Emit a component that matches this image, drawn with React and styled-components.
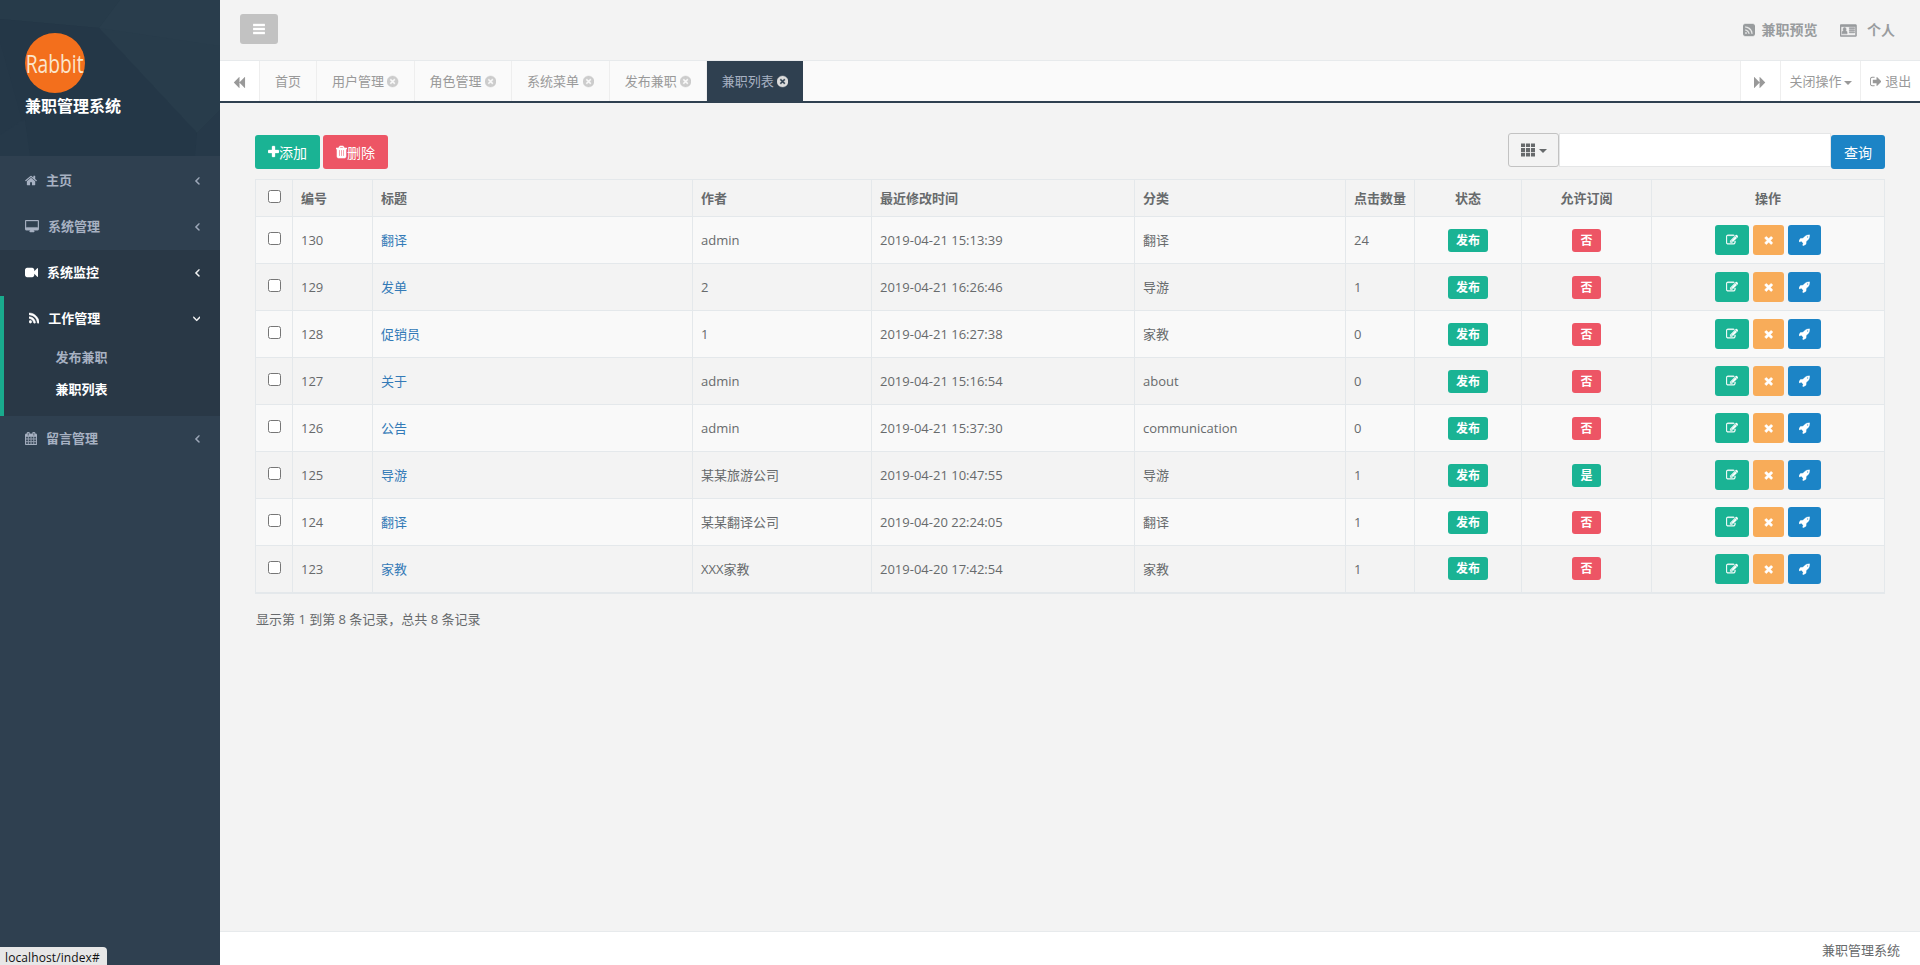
import React from 'react';
import styled, { createGlobalStyle } from 'styled-components';

const GlobalStyle = createGlobalStyle`
  * {
    box-sizing: border-box;
  }
  body {
    margin: 0;
    background: #f3f3f3;
    color: #676a6c;
    font-family: "Open Sans", "Noto Sans CJK SC", sans-serif;
    font-size: 13px;
    line-height: 18px;
  }
`;

// [viewBox x, viewBox width, path], all on a 1792 high grid
const icons = {
  home: [64, 1664, 'M1472 992v480q0 26-19 45t-45 19h-384v-384h-256v384h-384q-26 0-45-19t-19-45v-480q0-1 .5-3t.5-3l575-474 575 474q1 2 1 6zm223-69l-62 74q-8 9-21 11h-3q-13 0-21-7l-692-577-692 577q-12 8-24 7-13-2-21-11l-62-74q-8-10-7-23.5t11-21.5l719-599q32-26 76-26t76 26l244 204v-195q0-14 9-23t23-9h192q14 0 23 9t9 23v408l219 182q10 8 11 21.5t-7 23.5z'],
  desktop: [0, 1920, 'M1792 992v-832q0-13-9.5-22.5t-22.5-9.5h-1600q-13 0-22.5 9.5t-9.5 22.5v832q0 13 9.5 22.5t22.5 9.5h1600q13 0 22.5-9.5t9.5-22.5zm128-832v1088q0 66-47 113t-113 47h-544q0 37 16 77.5t32 71 16 43.5q0 26-19 45t-45 19h-512q-26 0-45-19t-19-45q0-14 16-44t32-70 16-78h-544q-66 0-113-47t-47-113v-1088q0-66 47-113t113-47h1600q66 0 113 47t47 113z', 60],
  video: [0, 1792, 'M1792 352v1088q0 42-39 59-13 5-25 5-27 0-45-19l-403-403v166q0 119-84.5 203.5t-203.5 84.5h-704q-119 0-203.5-84.5t-84.5-203.5v-704q0-119 84.5-203.5t203.5-84.5h704q119 0 203.5 84.5t84.5 203.5v165l403-402q18-19 45-19 12 0 25 5 39 17 39 59z'],
  rss: [192, 1408, 'M576 1344q0 80-56 136t-136 56-136-56-56-136 56-136 136-56 136 56 56 136zm512 123q2 28-17 48-18 21-47 21h-135q-25 0-43-16.5t-20-41.5q-22-229-184.5-391.5t-391.5-184.5q-25-2-41.5-20t-16.5-43v-135q0-29 21-47 17-17 43-17h5q160 13 306 80.5t259 181.5q114 113 181.5 259t80.5 306zm512 2q2 27-18 47-18 20-46 20h-143q-26 0-44.5-17.5t-19.5-42.5q-12-215-101-408.5t-231.5-336-336-231.5-408.5-102q-25-1-42.5-19.5t-17.5-43.5v-143q0-28 20-46 18-18 44-18h3q262 13 501.5 120t425.5 294q187 186 294 425.5t120 501.5z', 60],
  calendar: [64, 1664, 'M192 1664h288v-288h-288v288zm352 0h320v-288h-320v288zm-352-352h288v-320h-288v320zm352 0h320v-320h-320v320zm-352-384h288v-288h-288v288zm736 736h320v-288h-320v288zm-384-736h320v-288h-320v288zm768 736h288v-288h-288v288zm-384-352h320v-320h-320v320zm-352-864v-288q0-13-9.5-22.5t-22.5-9.5h-64q-13 0-22.5 9.5t-9.5 22.5v288q0 13 9.5 22.5t22.5 9.5h64q13 0 22.5-9.5t9.5-22.5zm736 864h288v-320h-288v320zm-384-384h320v-288h-320v288zm384 0h288v-288h-288v288zm32-480v-288q0-13-9.5-22.5t-22.5-9.5h-64q-13 0-22.5 9.5t-9.5 22.5v288q0 13 9.5 22.5t22.5 9.5h64q13 0 22.5-9.5t9.5-22.5zm384-64v1280q0 52-38 90t-90 38h-1408q-52 0-90-38t-38-90v-1280q0-52 38-90t90-38h128v-96q0-66 47-113t113-47h64q66 0 113 47t47 113v96h384v-96q0-66 47-113t113-47h64q66 0 113 47t47 113v96h128q52 0 90 38t38 90z', 45],
  left: [576, 640, 'M1203 544q0 13-10 23l-393 393 393 393q10 10 10 23t-10 23l-50 50q-10 10-23 10t-23-10l-466-466q-10-10-10-23t10-23l466-466q10-10 23-10t23 10l50 50q10 10 10 23z', 70],
  down: [384, 1024, 'M1395 736q0 13-10 23l-466 466q-10 10-23 10t-23-10l-466-466q-10-10-10-23t10-23l50-50q10-10 23-10t23 10l393 393 393-393q10-10 23-10t23 10l50 50q10 10 10 23z', 70],
  bars: [128, 1536, 'M1664 1344v128q0 26-19 45t-45 19h-1408q-26 0-45-19t-19-45v-128q0-26 19-45t45-19h1408q26 0 45 19t19 45zm0-512v128q0 26-19 45t-45 19h-1408q-26 0-45-19t-19-45v-128q0-26 19-45t45-19h1408q26 0 45 19t19 45zm0-512v128q0 26-19 45t-45 19h-1408q-26 0-45-19t-19-45v-128q0-26 19-45t45-19h1408q26 0 45 19t19 45z', 50],
  rssSquare: [128, 1536, 'M640 1280q0-53-37.5-90.5t-90.5-37.5-90.5 37.5-37.5 90.5 37.5 90.5 90.5 37.5 90.5-37.5 37.5-90.5zm351 94q-13-232-177-396t-396-177q-14-1-24 9t-10 23v128q0 13 8.5 22t21.5 10q154 11 264 121t121 264q1 13 10 21.5t22 8.5h128q13 0 23-10t9-24zm384 1q-5-154-56-297.5t-139.5-260-205-205-260-139.5-297.5-56q-14-1-23 9-10 10-10 23v128q0 13 9 22t22 10q204 7 378 111.5t278.5 278.5 111.5 378q1 13 10 22t22 9h128q13 0 23-10 11-9 9-23zm289-959v960q0 119-84.5 203.5t-203.5 84.5h-960q-119 0-203.5-84.5t-84.5-203.5v-960q0-119 84.5-203.5t203.5-84.5h960q119 0 203.5 84.5t84.5 203.5z', 50],
  card: [0, 2048, 'M128 192h1792q128 0 128 128v1216q0 128-128 128h-1792q-128 0-128-128v-1216q0-128 128-128zm0 256v1088h1792v-1088zm128 896v-160q0-220 180-260-60-70-60-160 0-210 190-210t190 210q0 90-60 160 180 40 180 260v160zm896-128v-128h640v128zm0-256v-128h640v128zm0-256v-128h640v128z', 70],
  backward: [64, 1664, 'M1683 141q19-19 32-13t13 32v1472q0 26-13 32t-32-13l-710-710q-9-9-13-19v710q0 26-13 32t-32-13l-710-710q-19-19-19-45t19-45l710-710q19-19 32-13t13 32v710q4-10 13-19z'],
  forward: [64, 1664, 'M109 1651q-19 19-32 13t-13-32v-1472q0-26 13-32t32 13l710 710q9 9 13 19v-710q0-26 13-32t32 13l710 710q19 19 19 45t-19 45l-710 710q-19 19-32 13t-13-32v-710q-4 10-13 19z'],
  close: [128, 1536, 'M1277 1122q0-26-19-45l-181-181 181-181q19-19 19-45 0-27-19-46l-90-90q-19-19-46-19-26 0-45 19l-181 181-181-181q-19-19-45-19-27 0-46 19l-90 90q-19 19-19 46 0 26 19 45l181 181-181 181q-19 19-19 45 0 27 19 46l90 90q19 19 46 19 26 0 45-19l181-181 181 181q19 19 45 19 27 0 46-19l90-90q19-19 19-46zm387-226q0 209-103 385.5t-279.5 279.5-385.5 103-385.5-103-279.5-279.5-103-385.5 103-385.5 279.5-279.5 385.5-103 385.5 103 279.5 279.5 103 385.5z', 50],
  signOut: [64, 1568, 'M704 1440q0 4 1 20t.5 26.5-3 23.5-10 19.5-20.5 6.5h-320q-119 0-203.5-84.5t-84.5-203.5v-704q0-119 84.5-203.5t203.5-84.5h320q13 0 22.5 9.5t9.5 22.5q0 4 1 20t.5 26.5-3 23.5-10 19.5-20.5 6.5h-320q-66 0-113 47t-47 113v704q0 66 47 113t113 47h312l11.5 1 11.5 3 8 5.5 7 9 2 13.5zm928-544q0 26-19 45l-544 544q-19 19-45 19t-45-19-19-45v-288h-448q-26 0-45-19t-19-45v-384q0-26 19-45t45-19h448v-288q0-26 19-45t45-19 45 19l544 544q19 19 19 45z'],
  plus: [192, 1408, 'M1600 736v192q0 40-28 68t-68 28h-416v416q0 40-28 68t-68 28h-192q-40 0-68-28t-28-68v-416h-416q-40 0-68-28t-28-68v-192q0-40 28-68t68-28h416v-416q0-40 28-68t68-28h192q40 0 68 28t28 68v416h416q40 0 68 28t28 68z', 40],
  trash: [192, 1408, 'M704 1376v-704q0-14-9-23t-23-9h-64q-14 0-23 9t-9 23v704q0 14 9 23t23 9h64q14 0 23-9t9-23zm256 0v-704q0-14-9-23t-23-9h-64q-14 0-23 9t-9 23v704q0 14 9 23t23 9h64q14 0 23-9t9-23zm256 0v-704q0-14-9-23t-23-9h-64q-14 0-23 9t-9 23v704q0 14 9 23t23 9h64q14 0 23-9t9-23zm-544-992h448l-48-117q-7-9-17-11h-317q-10 2-17 11zm928 32v64q0 14-9 23t-23 9h-96v948q0 83-47 143.5t-113 60.5h-832q-66 0-113-58.5t-47-141.5v-952h-96q-14 0-23-9t-9-23v-64q0-14 9-23t23-9h309l70-167q15-37 54-63t79-26h320q40 0 79 26t54 63l70 167h309q14 0 23 9t9 23z', 70],
  edit: [0, 1792, 'M888 1184l116-116-152-152-116 116v56h96v96h56zm440-720q-16-16-33 1l-350 350q-17 17-1 33t33-1l350-350q17-17 1-33zm80 594v190q0 119-84.5 203.5t-203.5 84.5h-832q-119 0-203.5-84.5t-84.5-203.5v-832q0-119 84.5-203.5t203.5-84.5h832q63 0 117 25 15 7 18 23 3 17-9 29l-49 49q-14 14-32 8-23-6-45-6h-832q-66 0-113 47t-47 113v832q0 66 47 113t113 47h832q66 0 113-47t47-113v-126q0-13 9-22l64-64q15-15 35-7t20 29zm-96-738l288 288-672 672h-288v-288zm444 132l-92 92-288-288 92-92q28-28 68-28t68 28l152 152q28 28 28 68t-28 68z', 60],
  remove: [192, 1408, 'M1490 1322q0 40-28 68l-136 136q-28 28-68 28t-68-28l-294-294-294 294q-28 28-68 28t-68-28l-136-136q-28-28-28-68t28-68l294-294-294-294q-28-28-28-68t28-68l136-136q28-28 68-28t68 28l294 294 294-294q28-28 68-28t68 28l136 136q28 28 28 68t-28 68l-294 294 294 294q28 28 28 68z', 60],
  rocket: [64, 1664, 'M1440 448q0-40-28-68t-68-28-68 28-28 68 28 68 68 28 68-28 28-68zm224-288q0 249-75.5 430.5t-253.5 360.5q-81 80-195 176l-20 379q-2 16-16 26l-384 224q-7 4-16 4-12 0-23-9l-64-64q-13-14-8-32l85-276-281-281-276 85q-3 1-9 1-14 0-23-9l-64-64q-17-19-5-39l224-384q10-14 26-16l379-20q96-114 176-195 188-187 358-258t431-71q14 0 24 9.5t10 22.5z', 50],
  th: [0, 1792, 'M0 64h520v460h-520zM640 64h520v460h-520zM1280 64h512v460h-512zM0 640h520v500h-520zM640 640h520v500h-520zM1280 640h512v500h-512zM0 1260h520v460h-520zM640 1260h520v460h-520zM1280 1260h512v460h-512z'],
};

const Svg = styled.svg`
  display: block;
  flex: none;
  fill: currentColor;
  fill-rule: ${(p) => (p.$evenodd ? 'evenodd' : 'nonzero')};
  stroke: currentColor;
  stroke-width: ${(p) => p.$weight};
`;

const Icon = ({ name, size = 13, className }) => {
  const [x, w, d, weight = 0] = icons[name];
  return (
    <Svg className={className} $evenodd={name === 'card'} $weight={weight} width={(w / 1792) * size} height={size} viewBox={`${x} 0 ${w} 1792`}>
      <path d={d} />
    </Svg>
  );
};

const Page = styled.div`
  display: flex;
  height: 965px;
  position: relative;
  overflow: hidden;
`;

const Sidebar = styled.nav`
  width: 220px;
  flex: none;
  background: #2f4050;
  color: #a7b1c2;
  font-weight: 600;
`;

const Profile = styled.div`
  position: relative;
  height: 156px;
  margin-bottom: 2px;
  padding: 33px 25px 0;
  background: #263949;
`;

const Pattern = styled.svg`
  position: absolute;
  top: 0;
  left: 0;
`;

const Avatar = styled.div`
  position: relative;
  display: flex;
  align-items: center;
  justify-content: center;
  width: 60px;
  height: 60px;
  border-radius: 50%;
  background: #f36f1c;
  color: #fbe6cc;
  font: 25px/60px "Open Sans", sans-serif;
`;

const AvatarText = styled.span`
  flex: none;
  transform: scaleX(0.77);
`;

const SystemName = styled.div`
  position: relative;
  margin-top: 1px;
  color: #fff;
  font-size: 16px;
  font-weight: 700;
  line-height: 24px;
`;

const MenuItem = styled.div`
  display: flex;
  align-items: center;
  height: 46px;
  padding: 0 20px 1px 25px;
  background: ${(p) => (p.$active ? '#293846' : 'transparent')};
  color: ${(p) => (p.$active ? '#fff' : '#a7b1c2')};
`;

const MenuLabel = styled.span`
  flex: 1;
  margin: 0 0 1px 9px;
`;

const OpenGroup = styled.div`
  height: 120px;
  border-left: 4px solid #19aa8d;
  background: #293846;
`;

const SubItem = styled.div`
  height: 32px;
  padding-left: 51.5px;
  line-height: 30px;
  color: ${(p) => (p.$active ? '#fff' : '#a7b1c2')};
`;

const Main = styled.main`
  flex: 1;
  display: flex;
  flex-direction: column;
  min-width: 0;
`;

const Topbar = styled.header`
  display: flex;
  align-items: center;
  height: 60px;
  padding: 0 25px 0 20px;
  color: #999c9e;
  font-size: 14px;
  font-weight: 600;
`;

const Toggle = styled.button`
  display: flex;
  align-items: center;
  justify-content: center;
  width: 38px;
  height: 30px;
  margin: -2px auto 0 0;
  padding: 0;
  border: 0;
  border-radius: 3px;
  background: #c2c2c2;
  color: #fff;
`;

const TopLink = styled.a`
  display: flex;
  align-items: center;
  gap: ${(p) => p.$gap}px;
  margin-left: ${(p) => p.$left || 0}px;
`;

const Tabs = styled.div`
  display: flex;
  height: 43px;
  border-top: 1px solid #e7eaec;
  border-bottom: 2px solid #2f4050;
  background: #fafafa;
  color: #999;
`;

const Tab = styled.div`
  display: flex;
  align-items: center;
  gap: 3.4px;
  padding: 0 ${(p) => (p.$active ? 14.6 : 15)}px 1px;
  border-right: ${(p) => (p.$active ? 0 : '1px solid #eee')};
  background: ${(p) => (p.$active ? '#2f4050' : 'transparent')};
  color: ${(p) => (p.$active ? '#a7b1c2' : '#999')};
`;

const TabClose = styled(Icon)`
  margin-top: 1px;
  color: ${(p) => (p.$active ? '#ddd' : '#ccc')};
`;

const RollButton = styled.div`
  display: flex;
  align-items: center;
  justify-content: center;
  gap: ${(p) => p.$gap || 0}px;
  width: ${(p) => p.$width}px;
  margin-left: ${(p) => (p.$push ? 'auto' : 0)};
  padding-top: ${(p) => p.$drop || 0}px;
  border-left: ${(p) => (p.$first ? 0 : '1px solid #eee')};
  border-right: ${(p) => (p.$first ? '1px solid #eee' : 0)};
  background: #fff;
`;

const Caret = styled.span`
  width: 0;
  height: 0;
  margin-top: 3px;
  border: 4px solid transparent;
  border-top-color: currentColor;
  border-bottom: 0;
`;

const Content = styled.section`
  flex: 1;
  padding: 30px 35px 0;
`;

const Toolbar = styled.div`
  display: flex;
  align-items: flex-start;
  height: 46px;
`;

const ToolButton = styled.button`
  display: flex;
  align-items: center;
  justify-content: center;
  width: ${(p) => p.$width}px;
  height: 34px;
  margin: 2px ${(p) => p.$gap || 0}px 0 0;
  padding: 0 0 1px;
  border: 0;
  border-radius: 3px;
  background: ${(p) => p.$color};
  color: #fff;
  font: 14px "Open Sans", "Noto Sans CJK SC", sans-serif;
`;

const ColumnsButton = styled.button`
  display: flex;
  align-items: center;
  justify-content: center;
  gap: 4px;
  width: 51px;
  height: 34px;
  margin-left: auto;
  padding: 0 0 1px;
  border: 1px solid #c2c2c2;
  border-radius: 3px;
  background: #f3f3f3;
  color: #676a6c;
`;

const SearchInput = styled.input`
  width: 272px;
  height: 34px;
  border: 1px solid #e5e6e7;
  background: #fff;
`;

const Table = styled.table`
  width: 1630px;
  table-layout: fixed;
  border-collapse: collapse;
  border: 1px solid #e4e8eb;
  border-bottom-width: 2px;
`;

const Th = styled.th`
  height: 37px;
  padding: 0 8px 1px;
  border: 1px solid #e4e8eb;
  text-align: ${(p) => p.$align || 'left'};
  font-weight: 700;
`;

const Tr = styled.tr`
  background: ${(p) => (p.$odd ? '#f9f9f9' : 'transparent')};
`;

const Td = styled.td`
  height: 47px;
  padding: 0 8px;
  border: 1px solid #e4e8eb;
  text-align: ${(p) => p.$align || 'left'};
`;

const Check = styled.input`
  display: block;
  width: 13px;
  height: 13px;
  margin: 0 auto 3px;
`;

const TitleLink = styled.a`
  color: #337ab7;
`;

const Badge = styled.span`
  display: inline-block;
  height: 23px;
  padding: 0 8px;
  border-radius: 3px;
  background: ${(p) => p.$color};
  color: #fff;
  font-size: 12px;
  font-weight: 700;
  line-height: 23px;
  vertical-align: middle;
`;

const Actions = styled.div`
  display: flex;
  justify-content: center;
  gap: 4px;
`;

const ActionButton = styled.button`
  display: flex;
  align-items: center;
  justify-content: center;
  width: ${(p) => p.$width}px;
  height: 30px;
  padding: 0;
  border: 0;
  border-radius: 3px;
  background: ${(p) => p.$color};
  color: #fff;
`;

const Summary = styled.div`
  margin: 16px 0 0 1px;
`;

const Footer = styled.footer`
  height: 34px;
  padding: 9px 20px 0 0;
  border-top: 1px solid #e7eaec;
  background: #fff;
  text-align: right;
`;

const StatusBubble = styled.div`
  position: absolute;
  left: 0;
  bottom: 0;
  width: 107px;
  height: 18px;
  padding-left: 5px;
  border-top-right-radius: 4px;
  background: #e7e7e7;
  color: #111;
  font: 12px/21px "Open Sans", sans-serif;
  letter-spacing: 0.1px;
`;

const green = '#1ab394';
const red = '#ed5565';
const orange = '#f8ac59';
const blue = '#1c84c6';

const tabs = ['用户管理', '角色管理', '系统菜单', '发布兼职', '兼职列表'];

const columns = [
  ['编号', 80],
  ['标题', 320],
  ['作者', 179],
  ['最近修改时间', 263],
  ['分类', 211],
  ['点击数量', 69],
  ['状态', 107, 'center'],
  ['允许订阅', 130, 'center'],
  ['操作', 233, 'center'],
];

const rows = [
  [130, '翻译', 'admin', '2019-04-21 15:13:39', '翻译', 24, false],
  [129, '发单', '2', '2019-04-21 16:26:46', '导游', 1, false],
  [128, '促销员', '1', '2019-04-21 16:27:38', '家教', 0, false],
  [127, '关于', 'admin', '2019-04-21 15:16:54', 'about', 0, false],
  [126, '公告', 'admin', '2019-04-21 15:37:30', 'communication', 0, false],
  [125, '导游', '某某旅游公司', '2019-04-21 10:47:55', '导游', 1, true],
  [124, '翻译', '某某翻译公司', '2019-04-20 22:24:05', '翻译', 1, false],
  [123, '家教', 'XXX家教', '2019-04-20 17:42:54', '家教', 1, false],
];

const Menu = ({ icon, label, active, open }) => (
  <MenuItem $active={active}>
    <Icon name={icon} />
    <MenuLabel>{label}</MenuLabel>
    <Icon name={open ? 'down' : 'left'} />
  </MenuItem>
);

const App = () => {
  return (
    <Page>
      <GlobalStyle />
      <Sidebar>
        <Profile>
          <Pattern width="220" height="156">
            <path d="M0 0H120L99 28L0 19Z" fill="#273b4a" />
            <path d="M120 0H220V110L197 133L99 28Z" fill="#283c4b" />
            <path d="M99 28L220 46V0H120Z" fill="#293d4c" />
            <path d="M0 19L99 28L197 133L195 156H30L25 120L0 125Z" fill="#243747" />
            <path d="M0 41L22 120L0 135Z" fill="#253848" />
            <path d="M0 135L25 120L30 156H0Z" fill="#263949" />
            <path d="M197 133L220 110V156H195Z" fill="#263949" />
          </Pattern>
          <Avatar><AvatarText>Rabbit</AvatarText></Avatar>
          <SystemName>兼职管理系统</SystemName>
        </Profile>
        <Menu icon="home" label="主页" />
        <Menu icon="desktop" label="系统管理" />
        <Menu icon="video" label="系统监控" active />
        <OpenGroup>
          <Menu icon="rss" label="工作管理" active open />
          <SubItem>发布兼职</SubItem>
          <SubItem $active>兼职列表</SubItem>
        </OpenGroup>
        <Menu icon="calendar" label="留言管理" />
      </Sidebar>
      <Main>
        <Topbar>
          <Toggle><Icon name="bars" size={14} /></Toggle>
          <TopLink $gap={6}><Icon name="rssSquare" size={14} />兼职预览</TopLink>
          <TopLink $gap={10} $left={23}><Icon name="card" size={14.5} />个人</TopLink>
        </Topbar>
        <Tabs>
          <RollButton $width={40} $drop={2} $first><Icon name="backward" /></RollButton>
          <Tab>首页</Tab>
          {tabs.map((name, i) => (
            <Tab key={name} $active={i === tabs.length - 1}>
              {name}
              <TabClose name="close" $active={i === tabs.length - 1} />
            </Tab>
          ))}
          <RollButton $width={40} $drop={2} $push><Icon name="forward" /></RollButton>
          <RollButton $width={80} $gap={2}>关闭操作<Caret /></RollButton>
          <RollButton $width={60} $gap={4}><Icon name="signOut" />退出</RollButton>
        </Tabs>
        <Content>
          <Toolbar>
            <ToolButton $width={65} $gap={3} $color={green}><Icon name="plus" size={14} />添加</ToolButton>
            <ToolButton $width={65} $color={red}><Icon name="trash" size={14} />删除</ToolButton>
            <ColumnsButton><Icon name="th" size={14} /><Caret /></ColumnsButton>
            <SearchInput type="text" />
            <ToolButton $width={54} $color={blue}>查询</ToolButton>
          </Toolbar>
          <Table>
            <colgroup>
              <col width="37" />
              {columns.map(([name, width]) => <col key={name} width={width} />)}
            </colgroup>
            <thead>
              <tr>
                <Th><Check type="checkbox" /></Th>
                {columns.map(([name, , align]) => <Th key={name} $align={align}>{name}</Th>)}
              </tr>
            </thead>
            <tbody>
              {rows.map(([id, title, author, time, type, hits, allowed], i) => (
                <Tr key={id} $odd={i % 2 === 0}>
                  <Td><Check type="checkbox" /></Td>
                  <Td>{id}</Td>
                  <Td><TitleLink>{title}</TitleLink></Td>
                  <Td>{author}</Td>
                  <Td>{time}</Td>
                  <Td>{type}</Td>
                  <Td>{hits}</Td>
                  <Td $align="center"><Badge $color={green}>发布</Badge></Td>
                  <Td $align="center"><Badge $color={allowed ? green : red}>{allowed ? '是' : '否'}</Badge></Td>
                  <Td>
                    <Actions>
                      <ActionButton $width={34} $color={green}><Icon name="edit" size={12} /></ActionButton>
                      <ActionButton $width={31} $color={orange}><Icon name="remove" size={12} /></ActionButton>
                      <ActionButton $width={33} $color={blue}><Icon name="rocket" size={12} /></ActionButton>
                    </Actions>
                  </Td>
                </Tr>
              ))}
            </tbody>
          </Table>
          <Summary>显示第 1 到第 8 条记录，总共 8 条记录</Summary>
        </Content>
        <Footer>兼职管理系统</Footer>
      </Main>
      <StatusBubble>localhost/index#</StatusBubble>
    </Page>
  );
};

export default App;
